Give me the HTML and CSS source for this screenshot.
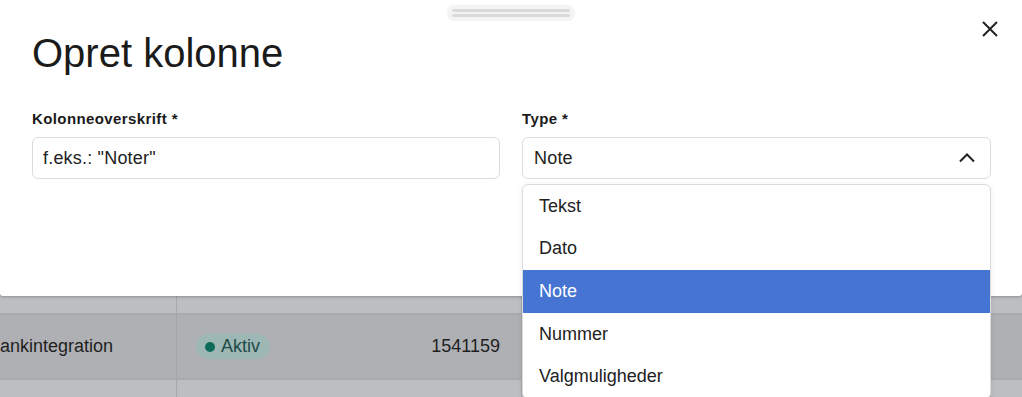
FILE: index.html
```html
<!DOCTYPE html>
<html lang="da">
<head>
    <meta charset="UTF-8">
    <meta name="viewport" content="width=device-width, initial-scale=1.0">
    <title>Opret kolonne</title>
    <link rel="stylesheet" href="styles.css">
</head>
<body>

    <!-- Tabel bag modal -->
    <div class="page">
        <div class="row row-head">
            <div class="cell"></div>
            <div class="cell"></div>
            <div class="cell"></div>
            <div class="cell last"></div>
        </div>
        <div class="row row-dark">
            <div class="cell">Bankintegration</div>
            <div class="cell status-cell">
                <span class="badge"><span class="dot"></span>Aktiv</span>
                <span>1541159</span>
            </div>
            <div class="cell"></div>
            <div class="cell last"></div>
        </div>
        <div class="row row-light">
            <div class="cell"></div>
            <div class="cell"></div>
            <div class="cell"></div>
            <div class="cell last"></div>
        </div>
    </div>

    <!-- Modal -->
    <div class="sheet">
        <div class="handle"><span></span><span></span></div>
        <button class="close-btn" aria-label="Luk">
            <svg width="16" height="16" viewBox="0 0 16 16">
                <path d="M1 1 L15 15 M15 1 L1 15" stroke="#222" stroke-width="2" fill="none"/>
            </svg>
        </button>

        <h1>Opret kolonne</h1>

        <div class="form">
            <div class="field">
                <label>Kolonneoverskrift *</label>
                <div class="input">f.eks.: "Noter"</div>
            </div>
            <div class="field">
                <label>Type *</label>
                <div class="input select">
                    <span>Note</span>
                    <svg width="16" height="10" viewBox="0 0 16 10">
                        <path d="M1 8.5 L8 1.5 L15 8.5" stroke="#222" stroke-width="2" fill="none"/>
                    </svg>
                </div>
                <ul class="dropdown">
                    <li>Tekst</li>
                    <li>Dato</li>
                    <li class="active">Note</li>
                    <li>Nummer</li>
                    <li>Valgmuligheder</li>
                </ul>
            </div>
        </div>
    </div>

</body>
</html>
```

FILE: styles.css
```css
/* Global Style */
* {
    margin: 0;
    padding: 0;
    box-sizing: border-box;
    font-family: 'Liberation Sans', Arial, sans-serif;
}
body {
    width: 1022px;
    height: 397px;
    overflow: hidden;
    position: relative;
    background: #bdbec2;
    color: #222;
}

/* Tabel bag modal */
.page {
    padding-top: 250px;
    margin-left: -28px;
}
.row {
    display: grid;
    grid-template-columns: 205px 345px 469px 1fr;
    border-bottom: 2px solid #a8a9ad;
}
.row-head {
    height: 65px;
    background: #bdbec2;
}
.row-dark {
    height: 65px;
    background: #afb0b4;
}
.row-light {
    height: 60px;
    background: #bdbec2;
    border-bottom: none;
}
.cell {
    border-right: 1px solid #a6a7ab;
    padding-left: 16px;
    display: flex;
    align-items: center;
    font-size: 18px;
    color: #1f1f1f;
    white-space: nowrap;
}
.cell.last {
    border-right: none;
}
.status-cell {
    justify-content: space-between;
    padding-left: 19px;
    padding-right: 21px;
}
.badge {
    display: flex;
    align-items: center;
    height: 25px;
    padding: 0 10px 0 9px;
    border-radius: 13px;
    background: #9db7b4;
    color: #1d4a47;
}
.dot {
    width: 10px;
    height: 10px;
    border-radius: 50%;
    background: #0f6b59;
    margin-right: 6px;
}

/* Modal */
.sheet {
    position: absolute;
    top: 0;
    left: 0;
    width: 100%;
    height: 296px;
    background: white;
    border-radius: 0 0 3px 3px;
    box-shadow: 0px 1px 3px rgba(0, 0, 0, 0.25);
    padding: 29px 31px 0 32px;
}
.handle {
    position: absolute;
    top: 5px;
    left: 447px;
    width: 128px;
    height: 16px;
    background: #f4f4f4;
    border-radius: 7px;
    padding: 4px 5px 0;
}
.handle span {
    display: block;
    height: 3px;
    border-radius: 2px;
    background: #dadada;
    margin-bottom: 2px;
}
.close-btn {
    position: absolute;
    top: 21px;
    right: 24px;
    width: 16px;
    height: 16px;
    border: none;
    background: none;
    cursor: pointer;
}
.close-btn svg {
    display: block;
}
h1 {
    font-size: 40px;
    line-height: 48px;
    font-weight: normal;
    color: #1b1b1b;
}
.form {
    display: grid;
    grid-template-columns: 468px 469px;
    gap: 22px;
    margin-top: 32px;
}
.field {
    position: relative;
}
label {
    display: block;
    font-size: 15px;
    line-height: 20px;
    font-weight: bold;
    letter-spacing: 0.4px;
    color: #1b1b1b;
    margin-bottom: 8px;
}
.input {
    height: 42px;
    border: 1px solid #dcdcdc;
    border-radius: 6px;
    padding: 0 12px 0 10px;
    font-size: 18px;
    letter-spacing: 0.2px;
    display: flex;
    align-items: center;
    color: #222;
}
.select {
    justify-content: space-between;
    padding-left: 11px;
    padding-right: 15px;
}
.dropdown {
    position: absolute;
    top: 75px;
    left: 0;
    right: 0;
    list-style: none;
    background: white;
    border: 1px solid #dcdcdc;
    border-radius: 6px;
    box-shadow: 0px 2px 6px rgba(0, 0, 0, 0.08);
}
.dropdown li {
    height: 42.67px;
    display: flex;
    align-items: center;
    padding-left: 16px;
    font-size: 18px;
    color: #222;
}
.dropdown li.active {
    background: #4574d2;
    color: white;
}
```
